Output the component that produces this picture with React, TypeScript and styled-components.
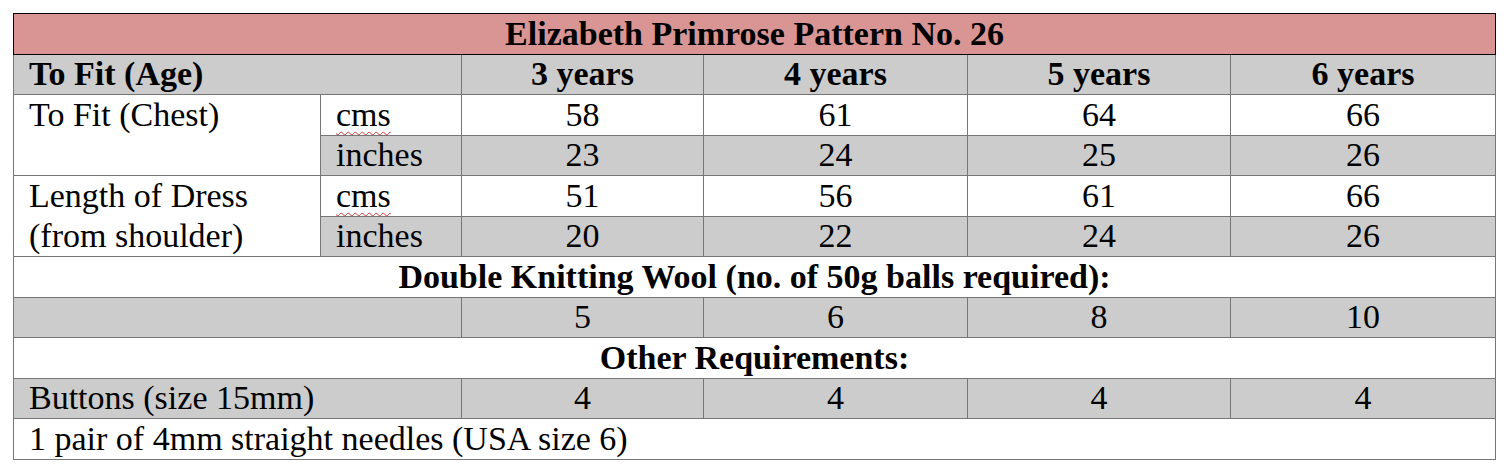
import React from 'react';
import styled, {createGlobalStyle} from "styled-components";

const GlobalStyle = createGlobalStyle`
    html, body {
        margin: 0;
        padding: 0;
        background: #ffffff;
    }
    body {
        font-family: "Liberation Serif", "Times New Roman", serif;
        color: #000000;
    }
`

const sizes = [
    {label: '3 years', chestCm: 58, chestIn: 23, lengthCm: 51, lengthIn: 20, balls: 5, buttons: 4},
    {label: '4 years', chestCm: 61, chestIn: 24, lengthCm: 56, lengthIn: 22, balls: 6, buttons: 4},
    {label: '5 years', chestCm: 64, chestIn: 25, lengthCm: 61, lengthIn: 24, balls: 8, buttons: 4},
    {label: '6 years', chestCm: 66, chestIn: 26, lengthCm: 66, lengthIn: 26, balls: 10, buttons: 4},
]

export default function App() {
    return (
        <Page>
            <GlobalStyle/>
            <PatternTable>
                <colgroup>
                    <col style={{width: 307}}/>
                    <col style={{width: 141}}/>
                    <col style={{width: 242}}/>
                    <col style={{width: 264}}/>
                    <col style={{width: 263}}/>
                    <col style={{width: 265}}/>
                </colgroup>
                <tbody>
                    <Row>
                        <TitleCell colSpan={6}>Elizabeth Primrose Pattern No. 26</TitleCell>
                    </Row>
                    <Row $shaded>
                        <Cell colSpan={2} $bold>To Fit (Age)</Cell>
                        {sizes.map(s => <Cell key={s.label} $bold $center>{s.label}</Cell>)}
                    </Row>

                    <Row>
                        <LabelCell rowSpan={2}>To Fit (Chest)</LabelCell>
                        <Cell><Misspelt>cms</Misspelt></Cell>
                        {sizes.map(s => <Cell key={s.label} $center>{s.chestCm}</Cell>)}
                    </Row>
                    <Row $shaded>
                        <Cell>inches</Cell>
                        {sizes.map(s => <Cell key={s.label} $center>{s.chestIn}</Cell>)}
                    </Row>

                    <Row>
                        <LabelCell rowSpan={2}>Length of Dress<br/>(from shoulder)</LabelCell>
                        <Cell><Misspelt>cms</Misspelt></Cell>
                        {sizes.map(s => <Cell key={s.label} $center>{s.lengthCm}</Cell>)}
                    </Row>
                    <Row $shaded>
                        <Cell>inches</Cell>
                        {sizes.map(s => <Cell key={s.label} $center>{s.lengthIn}</Cell>)}
                    </Row>

                    <Row>
                        <Cell colSpan={6} $bold $center>Double Knitting Wool (no. of 50g balls required):</Cell>
                    </Row>
                    <Row $shaded>
                        <Cell colSpan={2}/>
                        {sizes.map(s => <Cell key={s.label} $center>{s.balls}</Cell>)}
                    </Row>

                    <Row>
                        <Cell colSpan={6} $bold $center>Other Requirements:</Cell>
                    </Row>
                    <Row $shaded>
                        <Cell colSpan={2}>Buttons (size 15mm)</Cell>
                        {sizes.map(s => <Cell key={s.label} $center>{s.buttons}</Cell>)}
                    </Row>
                    <Row>
                        <Cell colSpan={6}>1 pair of 4mm straight needles (USA size 6)</Cell>
                    </Row>
                </tbody>
            </PatternTable>
        </Page>
    );
}

const Page = styled.div`
    padding: 13px 0 0 13px;
`
const PatternTable = styled.table`
    border-collapse: collapse;
    table-layout: fixed;
    width: 1482px;
    font-size: 34px;
`
const Row = styled.tr<{$shaded?: boolean}>`
    height: 40.5px;
    background: ${({$shaded}) => $shaded ? '#cccccc' : '#ffffff'};
`
const Cell = styled.td<{$bold?: boolean, $center?: boolean}>`
    border: 1px solid #767676;
    padding: 0 15px;
    line-height: 38px;
    white-space: nowrap;
    font-weight: ${({$bold}) => $bold ? 700 : 400};
    text-align: ${({$center}) => $center ? 'center' : 'left'};
    vertical-align: middle;
`
const LabelCell = styled(Cell)`
    background: #ffffff;
    vertical-align: top;
    line-height: 40px;
`
const TitleCell = styled.td`
    border: 1px solid #000000;
    background: #d99594;
    font-weight: 700;
    text-align: center;
    line-height: 38px;
    padding: 0;
`
const Misspelt = styled.span`
    text-decoration: underline wavy #d33a3a;
    text-decoration-thickness: 1px;
    text-underline-offset: 5px;
`
